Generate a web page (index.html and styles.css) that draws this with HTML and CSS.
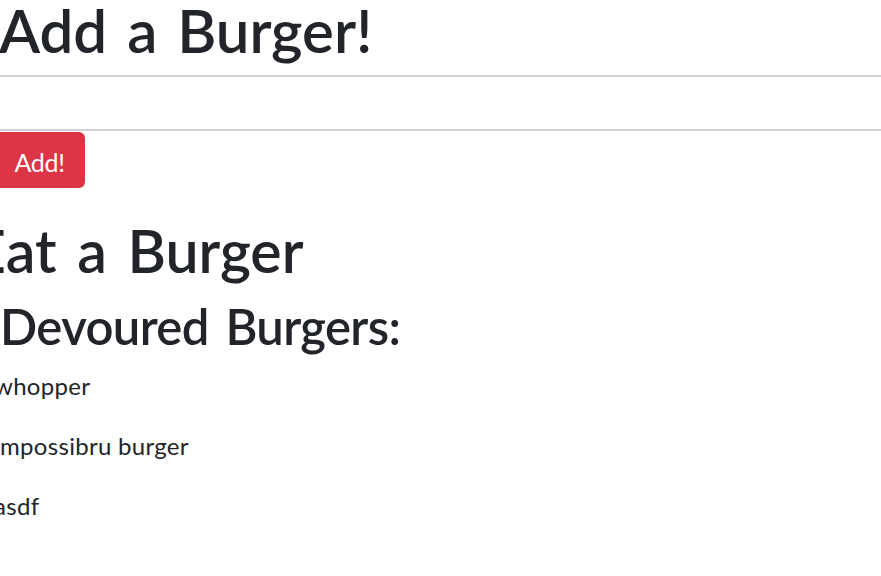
FILE: index.html
```html
<!DOCTYPE html>
<html>
<head>
<meta charset="utf-8">
<title>Burgers</title>
<link rel="stylesheet" href="styles.css">
</head>
<body>
<div class="page">
  <h1 class="title-add">Add a Burger!</h1>
  <form class="add-form">
    <input class="burger-input" type="text" aria-label="Burger name">
    <button class="btn-add" type="button">Add!</button>
  </form>
  <h1 class="title-eat">Eat a Burger</h1>
  <h2 class="title-devoured">Devoured Burgers:</h2>
  <ul class="burger-list">
    <li class="burger-item">whopper</li>
    <li class="burger-item">impossibru burger</li>
    <li class="burger-item">asdf</li>
  </ul>
</div>
</body>
</html>
```

FILE: styles.css
```css
html, body {
  margin: 0;
  padding: 0;
  overflow: hidden;
  background: #ffffff;
}
body {
  font-family: "Lato", "Open Sans", sans-serif;
  color: #212529;
}
.page {
  margin-left: -6px;
  margin-right: -20px;
}
.title-add {
  margin: 0 0 15px 0;
  font-size: 60px;
  font-weight: 600;
  line-height: 60px;
  word-spacing: 5px;
  padding-left: 5px;
}
.add-form {
  display: flex;
  flex-direction: column;
  align-items: flex-start;
  gap: 1px;
  margin: 0;
}
.burger-input {
  box-sizing: border-box;
  width: 100%;
  height: 56px;
  border: 2px solid #ced4da;
  border-radius: 6px;
  margin-left: -4px;
  outline: none;
  font: inherit;
}
.btn-add {
  box-sizing: border-box;
  height: 56px;
  width: 95px;
  padding: 4px 0 0 4px;
  background: #dc3545;
  color: #ffffff;
  border: none;
  border-radius: 6px;
  margin-left: -4px;
  font-family: "Lato", sans-serif;
  font-size: 25px;
  letter-spacing: -0.3px;
  line-height: 30px;
}
.title-eat {
  margin: 33px 0 0 0;
  font-size: 59px;
  font-weight: 600;
  line-height: 60px;
  word-spacing: 6px;
  text-indent: -22px;
}
.title-devoured {
  margin: 15px 0 0 0;
  font-size: 49px;
  font-weight: 600;
  line-height: 60px;
  letter-spacing: -0.6px;
  word-spacing: 5px;
  padding-left: 6px;
}
.burger-list {
  list-style: none;
  margin: 0;
  padding: 0;
}
.burger-item {
  font-size: 24px;
  line-height: 60px;
  letter-spacing: 0.3px;
}
```
